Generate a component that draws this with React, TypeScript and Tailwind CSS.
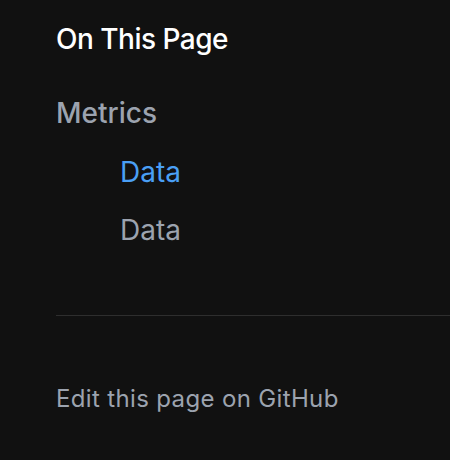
export default function App() {
  return (
    <div className="w-[450px] h-[460px] bg-[#111111] pl-[56px] pt-[21px] overflow-hidden" style={{ fontFamily: "Inter, 'Noto Sans', sans-serif" }}>
      <div className="text-[28px] leading-[36px] font-medium tracking-[-0.5px] text-white">On This Page</div>
      <ul className="mt-[38px] flex flex-col">
        <li className="text-[28px] leading-[36px] font-medium text-[#9ca3af]">Metrics</li>
        <li className="mt-[23px] pl-[64px] text-[28px] leading-[36px] text-[#4a9ff5]">Data</li>
        <li className="mt-[22px] pl-[64px] text-[28px] leading-[36px] text-[#9ca3af]">Data</li>
      </ul>
      <div className="mt-[67px] h-px bg-[#2e2e2e]" />
      <div className="mt-[67px] text-[24px] leading-[32px] tracking-[0.35px] text-[#9ca3af]">Edit this page on GitHub</div>
    </div>
  );
}
